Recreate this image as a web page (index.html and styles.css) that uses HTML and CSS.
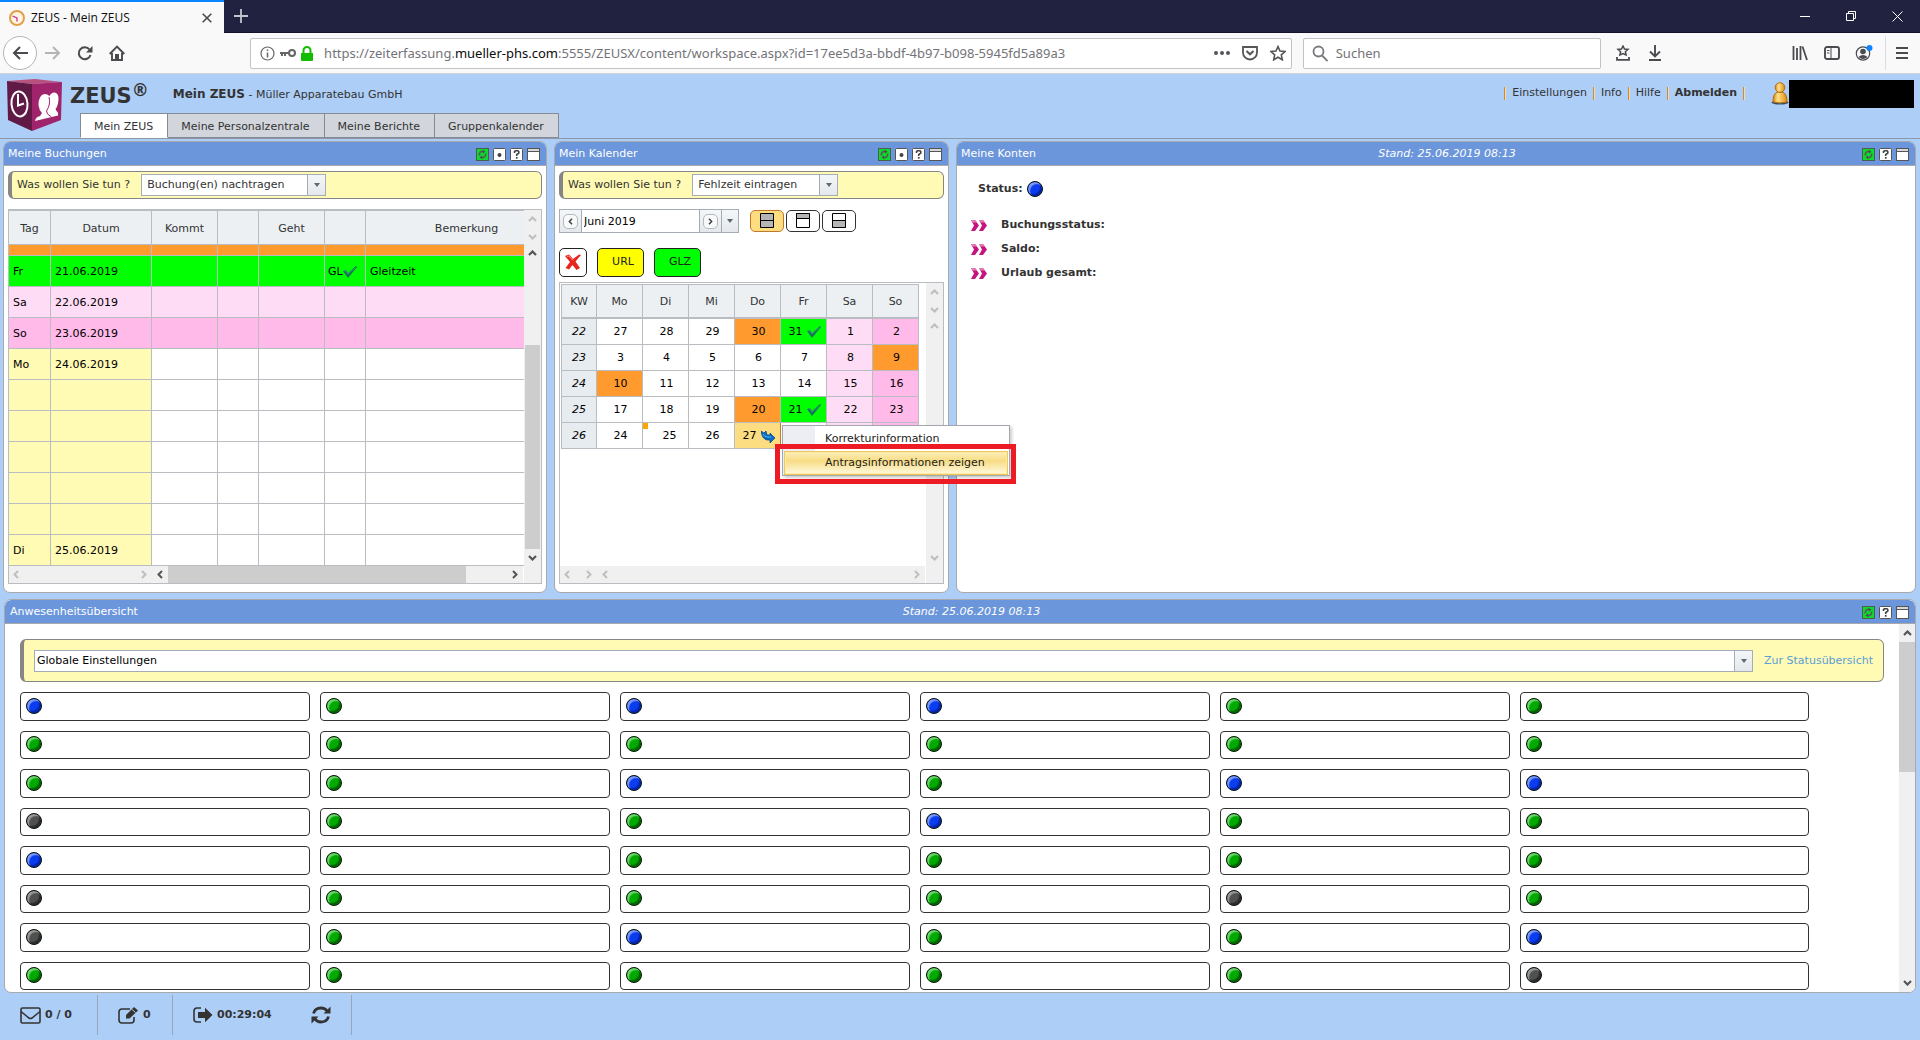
FILE: index.html
```html
<!DOCTYPE html>
<html lang="de">
<head>
<meta charset="utf-8">
<title>ZEUS - Mein ZEUS</title>
<link rel="stylesheet" href="styles.css">
</head>
<body>
<svg class="sprite" aria-hidden="true">
  <symbol id="up" viewBox="0 0 9 6"><path d="M1 5L4.500 1.500L8 5" fill="none" stroke="currentColor" stroke-width="2.200"/></symbol>
  <symbol id="down" viewBox="0 0 9 6"><path d="M1 1L4.500 4.500L8 1" fill="none" stroke="currentColor" stroke-width="2.200"/></symbol>
  <symbol id="left" viewBox="0 0 6 9"><path d="M5 1L1.500 4.500L5 8" fill="none" stroke="currentColor" stroke-width="2"/></symbol>
  <symbol id="right" viewBox="0 0 6 9"><path d="M1 1L4.500 4.500L1 8" fill="none" stroke="currentColor" stroke-width="2"/></symbol>
  <symbol id="check" viewBox="0 0 14 12"><path d="M0 5L3 4L5 7L13 0L14 1L5 12Z" fill="#12725a"/><path d="M1 5L3 4.500L5 8L12 2" fill="none" stroke="#3aa06c"/></symbol>
  <symbol id="w-refresh" viewBox="0 0 13 13"><rect x=".5" y=".5" width="12" height="12" fill="#0adb2c" stroke="#4f5a50"/><path d="M3.500 7.500A3 3 0 0 1 7.500 3.700M9.500 5.500A3 3 0 0 1 5.500 9.300" fill="none" stroke="#5a5a5a" stroke-width="1.700"/><path d="M6.500 2l3 1.500-2.500 2zM6.500 11l-3-1.500 2.500-2z" fill="#4a4a4a"/></symbol>
  <symbol id="w-dot" viewBox="0 0 13 13"><rect x=".5" y=".5" width="12" height="12" rx="1" fill="#fff" stroke="#555"/><circle cx="6.500" cy="7" r="2" fill="#444"/></symbol>
  <symbol id="w-help" viewBox="0 0 13 13"><rect x=".5" y=".5" width="12" height="12" rx="1" fill="#fff" stroke="#555"/><path d="M4.500 5V3.500L5.500 2.800H8L8.800 3.500V5L6.700 6.600V8" fill="none" stroke="#444" stroke-width="1.600"/><path d="M5.900 9h1.700v1.700H5.900z" fill="#444"/></symbol>
  <symbol id="w-max" viewBox="0 0 13 13"><rect x=".5" y=".5" width="12" height="12" fill="#fff" stroke="#555"/><path d="M1 1h11v2H1z" fill="#d8d8d8"/><path d="M1 3.500h11" stroke="#555"/></symbol>
  <symbol id="chev" viewBox="0 0 16 11"><path d="M0 0h4l4 5.500L4 11H0l3-5.500zM8 0h4l4 5.500L12 11H8l3-5.500z" fill="#c4157c"/><path d="M0 0h4l2 2.500H1.500zM8 0h4l2 2.500H9.500z" fill="#df7ab2"/></symbol>
</svg>

<div class="tabbar">
  <div class="browser-tab">
    <svg width="16" height="16" viewBox="0 0 16 16"><circle cx="8" cy="8" r="7" fill="#fff5e2" stroke="#e0a04a" stroke-width="2"/><path d="M3.500 6L8 8v3.500" fill="none" stroke="#c8328c" stroke-width="1.300"/></svg>
    <span class="browser-tab__title">ZEUS - Mein ZEUS</span>
    <button class="plain" aria-label="Tab schließen"><svg width="10" height="10" viewBox="0 0 10 10"><path d="M.7.700l8.600 8.600M9.300.700L.7 9.300" stroke="#4a4a4f" stroke-width="1.600"/></svg></button>
  </div>
  <button class="plain newtab" aria-label="Neuer Tab"><svg width="14" height="14" viewBox="0 0 14 14"><path d="M7 0v14M0 7h14" stroke="#c4c4cf" stroke-width="1.800"/></svg></button>
  <div class="winbtns">
    <button class="plain" aria-label="Minimieren"><svg width="10" height="10"><path d="M0 5.500h10" stroke="#fff"/></svg></button>
    <button class="plain" aria-label="Verkleinern"><svg width="10" height="10"><path d="M.5 2.500h7v7h-7zM2.500 2.500v-2h7v7h-2" fill="none" stroke="#fff"/></svg></button>
    <button class="plain" aria-label="Schließen"><svg width="11" height="11"><path d="M.5.500l10 10M10.500.500l-10 10" stroke="#fff"/></svg></button>
  </div>
</div>

<div class="navbar">
  <button class="plain back" aria-label="Zurück"><svg width="16" height="14" viewBox="0 0 16 14"><path d="M16 7H2M8 1L2 7l6 6" fill="none" stroke="#4a4a4f" stroke-width="2"/></svg></button>
  <button class="plain tool" aria-label="Vor"><svg width="16" height="14" viewBox="0 0 16 14"><path d="M0 7h14M8 1l6 6-6 6" fill="none" stroke="#b5b5b8" stroke-width="2"/></svg></button>
  <button class="plain tool" aria-label="Neu laden"><svg width="16" height="16" viewBox="0 0 16 16"><path d="M12.500 4.500A6 6 0 1 0 13.500 10" fill="none" stroke="#4a4a4f" stroke-width="2"/><path d="M15.500 1v6.500H9z" fill="#4a4a4f"/></svg></button>
  <button class="plain tool" aria-label="Startseite"><svg width="16" height="16" viewBox="0 0 16 16"><path d="M.7 9L8 1.500L15.300 9M3 8v7h10V8" fill="none" stroke="#4a4a4f" stroke-width="1.900"/><path d="M6 9h4v5H6z" fill="#4a4a4f"/></svg></button>
  <span class="space"></span>
  <div class="urlbar">
    <svg width="15" height="15" viewBox="0 0 15 15"><circle cx="7.500" cy="7.500" r="6.500" fill="none" stroke="#66666a" stroke-width="1.200"/><path d="M7.500 6.500v5M7.500 3.500v1.500" stroke="#66666a" stroke-width="1.500"/></svg>
    <svg width="16" height="8" viewBox="0 0 16 8"><circle cx="12" cy="4" r="3" fill="none" stroke="#66666a" stroke-width="2"/><path d="M0 4h9M2 4v3M5 4v3" stroke="#66666a" stroke-width="2"/></svg>
    <svg width="12" height="15" viewBox="0 0 12 15"><path d="M0 7h12v7a1 1 0 0 1-1 1H1a1 1 0 0 1-1-1z" fill="#12bc00"/><path d="M2.500 8V4.500a3.500 3.500 0 0 1 7 0V8" fill="none" stroke="#12bc00" stroke-width="2"/></svg>
    <span class="url">https://zeiterfassung.<b>mueller-phs.com</b>:5555/ZEUSX/content/workspace.aspx?id=17ee5d3a-bbdf-4b97-b098-5945fd5a89a3</span>
    <span class="urlbar__actions">
      <svg width="16" height="16"><circle cx="2" cy="8" r="2" fill="#55555a"/><circle cx="8" cy="8" r="2" fill="#55555a"/><circle cx="14" cy="8" r="2" fill="#55555a"/></svg>
      <svg width="16" height="16" viewBox="0 0 16 16"><path d="M1 2h14v5.500a7 7 0 0 1-14 0z" fill="none" stroke="#55555a" stroke-width="1.800"/><path d="M4.500 6L8 9.300L11.500 6" fill="none" stroke="#55555a" stroke-width="2"/></svg>
      <svg width="16" height="16" viewBox="0 0 16 16"><path d="M8 1.500l2 4.500 5 .5-3.700 3.300 1 5L8 12.300l-4.300 2.500 1-5L1 6.500 6 6z" fill="none" stroke="#55555a" stroke-width="1.600"/></svg>
    </span>
  </div>
  <label class="search">
    <svg width="16" height="17" viewBox="0 0 16 17"><circle cx="6.500" cy="6.500" r="5" fill="none" stroke="#7a7a7e" stroke-width="1.800"/><path d="M10 10.500l5.500 5.500" stroke="#7a7a7e" stroke-width="1.800"/></svg>
    <input type="text" placeholder="Suchen" aria-label="Suchen">
  </label>
  <div class="tools">
    <button class="plain tool" aria-label="Lesezeichen"><svg width="16" height="16" viewBox="0 0 16 16"><path d="M8 1l1.500 3 3.500.4-2.600 2.300.7 3.300L8 8.500 4.900 10l.7-3.300L3 4.400 6.500 4z" fill="none" stroke="#4a4a4f" stroke-width="1.500"/><path d="M2 12v2.800h12V12" fill="none" stroke="#4a4a4f" stroke-width="1.800"/></svg></button>
    <button class="plain tool" aria-label="Downloads"><svg width="14" height="16" viewBox="0 0 14 16"><path d="M7 0v11M2 6.500l5 5 5-5M1 15h12" fill="none" stroke="#4a4a4f" stroke-width="1.900"/></svg></button>
  </div>
  <span class="space space--end"></span>
  <div class="tools">
    <button class="plain tool" aria-label="Bibliothek"><svg width="16" height="16" viewBox="0 0 16 16"><path d="M1.500 1v14M5 3v12M8.500 1v14M10.500 1.500L15 15" fill="none" stroke="#4a4a4f" stroke-width="1.800"/></svg></button>
    <button class="plain tool" aria-label="Seitenleiste"><svg width="16" height="14" viewBox="0 0 16 14"><rect x="1" y="1" width="14" height="12" rx="2" fill="none" stroke="#4a4a4f" stroke-width="1.900"/><path d="M7 1v12" stroke="#4a4a4f"/><path d="M3 4.500h2.500M3 7h2.500" stroke="#4a4a4f"/></svg></button>
    <button class="plain tool" aria-label="Konto"><svg width="18" height="16" viewBox="0 0 18 16"><circle cx="8" cy="8.500" r="6.700" fill="none" stroke="#4a4a4f" stroke-width="1.200"/><circle cx="8" cy="6.500" r="2.800" fill="#4a4a4f"/><path d="M3.500 12q4.500-4 9 0q-4.500 4-9 0z" fill="#4a4a4f"/><circle cx="14.500" cy="3" r="3" fill="#0a84ff"/></svg></button>
    <button class="plain tool menu-btn" aria-label="Menü"><svg width="12" height="12"><path d="M0 1h12M0 6h12M0 11h12" stroke="#4a4a4f" stroke-width="2"/></svg></button>
  </div>
</div>

<header class="app-head">
  <svg class="logo" width="56" height="52" viewBox="0 0 56 52"><path d="M0 2L28 0L55 3L25 5z" fill="#b9517d"/><path d="M0 2l25 3v47L1 41z" fill="#611a45"/><path d="M25 5l30-2-1 38-29 11z" fill="#a0246c"/><ellipse cx="12.500" cy="25" rx="8" ry="12.500" fill="none" stroke="#fff" stroke-width="2" transform="rotate(-5 12 25)"/><path d="M11 15v11.500l6-2" fill="none" stroke="#fff" stroke-width="2"/><path d="M28 42q.5-4 5-5l2-3q-3-3-3.500-8 0-10 6-11 3 0 5 2 2-4 5.500-3.500 5 1.500 3 11-1 4-2.500 5.500l1 2q2 1 1.500 4.500z" fill="#fff"/><path d="M42 18q2 7-2.500 14l1 3 4 3" fill="none" stroke="#a0246c"/></svg>
  <div class="head-main">
    <div class="head-top">
      <h1>ZEUS<sup>®</sup></h1>
      <p class="company"><strong>Mein ZEUS</strong> - Müller Apparatebau GmbH</p>
      <nav class="links"><a href="#">Einstellungen</a><a href="#">Info</a><a href="#">Hilfe</a><a href="#"><strong>Abmelden</strong></a></nav>
      <div class="user">
        <svg width="18" height="23" viewBox="0 0 18 23"><defs><linearGradient id="gold"><stop offset="0" stop-color="#d98310"/><stop offset=".35" stop-color="#ffe08a"/><stop offset="1" stop-color="#e38c10"/></linearGradient></defs><ellipse cx="9" cy="20.500" rx="8.500" ry="2" fill="#38506b"/><path d="M2 20q0-9 5-10h4q5 1 5 10-7 2-14 0z" fill="url(#gold)" stroke="#b36b08"/><circle cx="9" cy="5.500" r="4.800" fill="url(#gold)" stroke="#b36b08"/></svg>
        <span class="user__name"></span>
      </div>
    </div>
    <nav class="tabs"><a class="active" href="#">Mein ZEUS</a><a href="#">Meine Personalzentrale</a><a href="#">Meine Berichte</a><a href="#">Gruppenkalender</a></nav>
  </div>
</header>

<main>
  <div class="top-panels">
    <section class="panel">
      <header><h2>Meine Buchungen</h2><span></span>
        <div class="icons"><button class="plain" aria-label="Aktualisieren"><svg><use href="#w-refresh"/></svg></button><button class="plain" aria-label="Optionen"><svg><use href="#w-dot"/></svg></button><button class="plain" aria-label="Hilfe"><svg><use href="#w-help"/></svg></button><button class="plain" aria-label="Maximieren"><svg><use href="#w-max"/></svg></button></div>
      </header>
      <div class="body">
        <div class="action"><label for="todo">Was wollen Sie tun ?</label><span class="combo combo--wide"><select id="todo"><option>Buchung(en) nachtragen</option></select></span></div>
        <div class="pane pane--bookings">
          <div class="clip">
            <table class="bookings">
              <colgroup><col class="c42"><col class="c101"><col class="c66"><col class="c41"><col class="c66"><col class="c41"><col></colgroup>
              <thead><tr><th>Tag</th><th>Datum</th><th>Kommt</th><th></th><th>Geht</th><th></th><th>Bemerkung</th></tr></thead>
              <tbody>
                <tr class="orange thin"><td></td><td></td><td></td><td></td><td></td><td></td><td></td></tr>
                <tr class="green"><td>Fr</td><td>21.06.2019</td><td></td><td></td><td></td><td class="code"><span>GL<svg width="14" height="12"><use href="#check"/></svg></span></td><td>Gleitzeit</td></tr>
                <tr class="sat"><td>Sa</td><td>22.06.2019</td><td></td><td></td><td></td><td></td><td></td></tr>
                <tr class="sun"><td>So</td><td>23.06.2019</td><td></td><td></td><td></td><td></td><td></td></tr>
                <tr class="work"><td>Mo</td><td>24.06.2019</td><td></td><td></td><td></td><td></td><td></td></tr>
                <tr class="work"><td></td><td></td><td></td><td></td><td></td><td></td><td></td></tr>
                <tr class="work"><td></td><td></td><td></td><td></td><td></td><td></td><td></td></tr>
                <tr class="work"><td></td><td></td><td></td><td></td><td></td><td></td><td></td></tr>
                <tr class="work"><td></td><td></td><td></td><td></td><td></td><td></td><td></td></tr>
                <tr class="work"><td></td><td></td><td></td><td></td><td></td><td></td><td></td></tr>
                <tr class="work"><td>Di</td><td>25.06.2019</td><td></td><td></td><td></td><td></td><td></td></tr>
              </tbody>
            </table>
          </div>
          <div class="vscroll">
            <div class="vscroll__head off"><svg width="9" height="6"><use href="#up"/></svg><svg width="9" height="6"><use href="#down"/></svg></div>
            <svg class="arrow" width="9" height="6"><use href="#up"/></svg>
            <div class="track"><div class="thumb thumb--bookings"></div></div>
            <svg class="arrow" width="9" height="6"><use href="#down"/></svg>
          </div>
          <div class="hscroll">
            <div class="hscroll__fixed off"><svg width="6" height="9"><use href="#left"/></svg><svg width="6" height="9"><use href="#right"/></svg></div>
            <svg width="6" height="9"><use href="#left"/></svg><div class="htrack"><div class="hthumb"></div></div><svg width="6" height="9"><use href="#right"/></svg>
          </div>
        </div>
      </div>
    </section>

    <section class="panel">
      <header><h2>Mein Kalender</h2><span></span>
        <div class="icons"><button class="plain" aria-label="Aktualisieren"><svg><use href="#w-refresh"/></svg></button><button class="plain" aria-label="Optionen"><svg><use href="#w-dot"/></svg></button><button class="plain" aria-label="Hilfe"><svg><use href="#w-help"/></svg></button><button class="plain" aria-label="Maximieren"><svg><use href="#w-max"/></svg></button></div>
      </header>
      <div class="body">
        <div class="action"><label for="todo2">Was wollen Sie tun ?</label><span class="combo"><select id="todo2"><option>Fehlzeit eintragen</option></select></span></div>
        <div class="calbar">
          <div class="month">
            <button class="plain" aria-label="Vorheriger Monat"><span class="round"><svg width="5" height="7" viewBox="0 0 6 9"><use href="#left"/></svg></span></button>
            <input type="text" value="Juni 2019" aria-label="Monat">
            <button class="plain" aria-label="Nächster Monat"><span class="round"><svg width="5" height="7" viewBox="0 0 6 9"><use href="#right"/></svg></span></button>
            <button class="plain drop" aria-label="Monat wählen"><svg width="6" height="4"><path d="M0 0h6L3 4z" fill="#5d6872"/></svg></button>
          </div>
          <div class="views">
            <button class="view view--on" aria-label="Ganzer Tag"><svg width="14" height="16"><path d="M.5.500h13v14H.5z" fill="#b5b5b5" stroke="#000"/><path d="M0 7.500h14" stroke="#000"/></svg></button>
            <button class="view" aria-label="Vormittag"><svg width="14" height="16"><path d="M.5.500h13v14H.5z" fill="#fff" stroke="#000"/><path d="M.5.500h13v5h-13z" fill="#b5b5b5" stroke="#000"/></svg></button>
            <button class="view" aria-label="Nachmittag"><svg width="14" height="16"><path d="M.5.500h13v14H.5z" fill="#fff" stroke="#000"/><path d="M.5 7.500h13v7H.5z" fill="#b5b5b5" stroke="#000"/></svg></button>
          </div>
        </div>
        <div class="types">
          <button class="type type--del" aria-label="Löschen"><svg width="16" height="16" viewBox="0 0 16 16"><path d="M0 2l4-1.500 4 4.500 6-4.500 2 .5-5.500 6.500L15 14l-3.500 2L7.500 11 4 15.500.5 14 5 8z" fill="#e8251c"/><path d="M2 2.500l2-.5L8 6.500" fill="none" stroke="#ff8a80"/></svg></button>
          <button class="type type--url">URL</button>
          <button class="type type--glz">GLZ</button>
        </div>
        <div class="pane pane--cal">
          <div class="calwrap">
            <table class="cal">
              <thead><tr><th class="kw">KW</th><th>Mo</th><th>Di</th><th>Mi</th><th>Do</th><th>Fr</th><th>Sa</th><th>So</th></tr></thead>
              <tbody>
                <tr><th>22</th><td>27</td><td>28</td><td>29</td><td class="orange">30</td><td class="green"><span>31<svg width="14" height="12"><use href="#check"/></svg></span></td><td class="sat">1</td><td class="sun">2</td></tr>
                <tr><th>23</th><td>3</td><td>4</td><td>5</td><td>6</td><td>7</td><td class="sat">8</td><td class="orange">9</td></tr>
                <tr><th>24</th><td class="orange">10</td><td>11</td><td>12</td><td>13</td><td>14</td><td class="sat">15</td><td class="sun">16</td></tr>
                <tr><th>25</th><td>17</td><td>18</td><td>19</td><td class="orange">20</td><td class="green"><span>21<svg width="14" height="12"><use href="#check"/></svg></span></td><td class="sat">22</td><td class="sun">23</td></tr>
                <tr><th>26</th><td>24</td><td class="today">25</td><td>26</td><td class="picked"><span>27<svg width="14" height="13" viewBox="0 0 14 13"><path d="M0 1l3 2 2-2 1 4h3V3l5 5-5 5v-3H6Q1 9 0 1z" fill="#0a6fc4" stroke="#053f7c" stroke-width=".7"/><path d="M2 4q1 3 5 3h3" fill="none" stroke="#4ab4ff"/></svg></span></td><td class="anchor">
                  <div class="popup">
                    <button class="plain popup__item">Korrekturinformation</button>
                    <button class="plain popup__item popup__item--hot">Antragsinformationen zeigen</button>
                    <div class="marker"></div>
                  </div></td><td class="sat"></td><td class="sun"></td></tr>
              </tbody>
            </table>
          </div>
          <div class="vscroll off">
            <div class="vscroll__head"><svg width="9" height="6"><use href="#up"/></svg><svg width="9" height="6"><use href="#down"/></svg></div>
            <svg class="arrow" width="9" height="6"><use href="#up"/></svg>
            <div class="track"></div>
            <svg class="arrow" width="9" height="6"><use href="#down"/></svg>
          </div>
          <div class="hscroll off">
            <div class="hscroll__fixed hscroll__fixed--small"><svg width="6" height="9"><use href="#left"/></svg><svg width="6" height="9"><use href="#right"/></svg></div>
            <svg width="6" height="9"><use href="#left"/></svg><div class="htrack"></div><svg width="6" height="9"><use href="#right"/></svg>
          </div>
        </div>
      </div>
    </section>

    <section class="panel">
      <header><h2>Meine Konten</h2><em>Stand: 25.06.2019 08:13</em>
        <div class="icons"><button class="plain" aria-label="Aktualisieren"><svg><use href="#w-refresh"/></svg></button><button class="plain" aria-label="Hilfe"><svg><use href="#w-help"/></svg></button><button class="plain" aria-label="Maximieren"><svg><use href="#w-max"/></svg></button></div>
      </header>
      <div class="accounts">
        <p class="status">Status: <i class="dot blue"></i></p>
        <ul>
          <li><svg width="16" height="11"><use href="#chev"/></svg>Buchungsstatus:</li>
          <li><svg width="16" height="11"><use href="#chev"/></svg>Saldo:</li>
          <li><svg width="16" height="11"><use href="#chev"/></svg>Urlaub gesamt:</li>
        </ul>
      </div>
    </section>
  </div>

  <section class="panel panel--presence">
    <header><h2>Anwesenheitsübersicht</h2><em>Stand: 25.06.2019 08:13</em>
      <div class="icons"><button class="plain" aria-label="Aktualisieren"><svg><use href="#w-refresh"/></svg></button><button class="plain" aria-label="Hilfe"><svg><use href="#w-help"/></svg></button><button class="plain" aria-label="Maximieren"><svg><use href="#w-max"/></svg></button></div>
    </header>
    <div class="presence">
      <div class="presence__main">
        <div class="action action--tall"><span class="combo combo--fill"><select aria-label="Einstellungen"><option>Globale Einstellungen</option></select></span><a href="#">Zur Statusübersicht</a></div>
        <ul class="people">
          <li><i class="dot blue"></i></li><li><i class="dot"></i></li><li><i class="dot blue"></i></li><li><i class="dot blue"></i></li><li><i class="dot"></i></li><li><i class="dot"></i></li>
          <li><i class="dot"></i></li><li><i class="dot"></i></li><li><i class="dot"></i></li><li><i class="dot"></i></li><li><i class="dot"></i></li><li><i class="dot"></i></li>
          <li><i class="dot"></i></li><li><i class="dot"></i></li><li><i class="dot blue"></i></li><li><i class="dot"></i></li><li><i class="dot blue"></i></li><li><i class="dot blue"></i></li>
          <li><i class="dot gray"></i></li><li><i class="dot"></i></li><li><i class="dot"></i></li><li><i class="dot blue"></i></li><li><i class="dot"></i></li><li><i class="dot"></i></li>
          <li><i class="dot blue"></i></li><li><i class="dot"></i></li><li><i class="dot"></i></li><li><i class="dot"></i></li><li><i class="dot"></i></li><li><i class="dot"></i></li>
          <li><i class="dot gray"></i></li><li><i class="dot"></i></li><li><i class="dot"></i></li><li><i class="dot"></i></li><li><i class="dot gray"></i></li><li><i class="dot"></i></li>
          <li><i class="dot gray"></i></li><li><i class="dot"></i></li><li><i class="dot blue"></i></li><li><i class="dot"></i></li><li><i class="dot"></i></li><li><i class="dot blue"></i></li>
          <li><i class="dot"></i></li><li><i class="dot"></i></li><li><i class="dot"></i></li><li><i class="dot"></i></li><li><i class="dot"></i></li><li><i class="dot gray"></i></li>
        </ul>
      </div>
      <div class="vscroll">
        <svg class="arrow" width="9" height="6"><use href="#up"/></svg>
        <div class="track"><div class="thumb thumb--presence"></div></div>
        <svg class="arrow" width="9" height="6"><use href="#down"/></svg>
      </div>
    </div>
  </section>
</main>

<footer>
  <div class="stat"><svg width="21" height="17" viewBox="0 0 21 17"><rect x="1" y="1" width="19" height="15" rx="1.500" fill="none" stroke="#333" stroke-width="1.600"/><path d="M1 4.500L9 11q1.500 1 3 0l8-6.500" fill="none" stroke="#333" stroke-width="1.600"/></svg>0 / 0</div>
  <div class="stat"><svg width="21" height="18" viewBox="0 0 21 18"><path d="M12 3H4Q1 3 1 6v8q0 3 3 3h9q3 0 3-3v-3" fill="none" stroke="#333" stroke-width="1.600"/><path d="M8 9l8-8 4 3.500-8.500 8H8z" fill="#333"/><path d="M14 3.500l3.500 3" stroke="#adcef7"/></svg>0</div>
  <div class="stat"><svg width="20" height="16" viewBox="0 0 20 16"><path d="M8 1H4Q1 1 1 4v8q0 3 3 3h4" fill="none" stroke="#333" stroke-width="1.600"/><path d="M5 5h7V.800L19.500 8 12 15.200V11H5z" fill="#333"/></svg>00:29:04
    <button class="plain" aria-label="Aktualisieren"><svg width="20" height="18" viewBox="0 0 20 18"><path d="M2.500 7.500Q4 2 10 2q4 0 6 3M17.500 10.500Q16 16 10 16q-4 0-6-3" fill="none" stroke="#333" stroke-width="2.800"/><path d="M19.500.500v7h-7zM.5 17.500v-7h7z" fill="#333"/></svg></button></div>
</footer>
</body>
</html>
```
FILE: styles.css
```css
* { box-sizing: border-box; }
body {
  margin: 0;
  min-height: 100vh;
  display: flex;
  flex-direction: column;
  background: #adcef7;
  color: #333;
  font: 11px/16px "DejaVu Sans", Verdana, sans-serif;
}
h1, h2, p, ul { margin: 0; padding: 0; }
ul { list-style: none; }
a { color: inherit; text-decoration: none; }
svg { display: block; flex: none; }
.sprite { position: absolute; width: 0; height: 0; }
input, select, button { font: inherit; color: inherit; }
.plain { border: 0; padding: 0; margin: 0; background: none; }

/* Browser window */
.tabbar { display: flex; height: 33px; background: #20223f; border-bottom: 1px solid #12132a; font: 12px/16px "Open Sans", sans-serif; }
.browser-tab {
  display: flex; align-items: center; gap: 6px;
  width: 224px; height: 33px; padding: 0 12px 0 9px;
  background: #f9f9fa; border-top: 2px solid #0a84ff; color: #0c0c0d;
}
.browser-tab__title { flex: 1; }
.newtab { width: 34px; display: flex; justify-content: center; align-items: center; }
.winbtns { display: flex; margin-left: auto; }
.winbtns button { width: 46px; display: flex; justify-content: center; align-items: center; }
.navbar {
  display: flex; align-items: center; height: 41px; padding: 0 3px;
  background: #f9f9fa; border-bottom: 1px solid #d4d4d8;
  font: 13px/18px "Noto Sans", "Open Sans", sans-serif;
}
.back { display: flex; align-items: center; justify-content: center; width: 34px; height: 34px; border: 1px solid #b4b4b6; border-radius: 50%; background: #fff; }
.tool { display: flex; align-items: center; justify-content: center; width: 32px; height: 34px; }
.tools { display: flex; }
.space { width: 6.1vw; flex: none; }
.space--end { width: 5.9vw; }
.urlbar, .search { display: flex; align-items: center; height: 31px; background: #fff; border: 1px solid #c2c2c4; border-radius: 2px; }
.urlbar { flex: 1; min-width: 0; gap: 5px; padding: 0 5px 0 9px; color: #737378; }
.url { margin-left: 6px; flex: 1; white-space: nowrap; overflow: hidden; }
.url b { font-weight: 400; color: #0c0c0d; }
.urlbar__actions { display: flex; gap: 12px; }
.search { width: 298px; margin: 0 6px 0 11px; padding: 0 8px; gap: 8px; }
.search input { flex: 1; min-width: 0; border: 0; padding: 0; outline: 0; background: none; }
.search input::placeholder { color: #737378; opacity: 1; }
.menu-btn { margin-left: 5px; border-left: 1px solid #dcdce0; }

/* Application header */
.app-head { display: flex; height: 65px; border-bottom: 1px solid #8c97a8; }
.logo { margin: 5px 7px 0 7px; }
.head-main { flex: 1; display: flex; flex-direction: column; }
.head-top { display: flex; height: 40px; padding: 0 6px 0 0; }
h1 { font-size: 21px; line-height: 24px; padding-top: 10px; }
sup { font-size: 17px; line-height: 0; vertical-align: 7px; font-weight: 700; }
.company { padding: 12px 0 0 24px; white-space: nowrap; }
.company strong { font-size: 12px; }
.links { display: flex; gap: 6px; margin-left: auto; padding-top: 12px; height: 26px; }
.links a { display: flex; align-items: center; gap: 6px; }
.links a::before, .links a:last-child::after { content: ""; width: 2px; height: 13px; background: linear-gradient(90deg, #c98a3c 50%, #ffd99b 50%); }
.user { display: flex; align-items: flex-start; padding-top: 6px; margin-left: 26px; }
.user svg { margin-top: 2px; }
.user__name { width: 125px; height: 28px; background: #000; }
.tabs { display: flex; margin-left: 10px; height: 25px; }
.tabs a { padding: 1px 14px 0 13px; border: 1px solid #858b94; border-left-width: 0; background: #d2d6dc; line-height: 24px; }
.tabs a.active { background: #fff; border-left-width: 1px; border-bottom-color: #fff; }

/* Panels */
main { padding: 2px 4px 0 3px; }
.top-panels { display: grid; grid-template-columns: 544fr 395fr 960fr; gap: 7px; }
.panel { background: #fff; border: 1px solid #a9a9ab; border-radius: 7px; min-width: 0; }
.panel > header {
  display: grid; grid-template-columns: 1fr auto 1fr; align-items: center;
  height: 24px; padding: 1px 6px 0 4px;
  background: #6b96db; color: #fff; border-bottom: 1px solid #a9a9ab; border-radius: 6px 6px 0 0;
}
.panel > header em { margin-left: 24px; }
h2 { font-size: 11px; font-weight: 400; line-height: 16px; }
.icons { display: flex; gap: 4px; justify-self: end; }
.icons svg { width: 13px; height: 13px; }
.body { padding: 5px 4px 8px; }
.action {
  display: flex; align-items: center; gap: 11px; height: 28px; padding: 0 7px 0 5px;
  background: #fffab4; border: 1px solid #868686; border-left: 4px solid #868686; border-radius: 6px;
}
.combo { position: relative; display: flex; width: 146px; height: 22px; }
.combo--wide { width: 185px; }
.combo--fill { flex: 1; }
.combo select { width: 100%; height: 100%; border: 1px solid #a6acb6; border-radius: 0; background: #fff; padding: 0 20px 0 5px; appearance: none; outline: 0; }
.combo--fill select { color: #000; padding-left: 2px; }
.combo::before { content: ""; position: absolute; right: 1px; top: 1px; bottom: 1px; width: 17px; border-left: 1px solid #a6acb6; background: linear-gradient(#f4f7f9, #e4e8ec); pointer-events: none; }
.combo::after { content: ""; position: absolute; right: 6px; top: 9px; border: 3px solid transparent; border-top: 4px solid #5d6872; border-bottom: 0; pointer-events: none; }

/* Grids with their scroll bars */
.pane { display: grid; grid-template-columns: 1fr 17px; border: 1px solid #b9bdc2; }
.pane--bookings { margin-top: 10px; grid-template-rows: 356px 17px; }
.pane--cal { margin-top: 5px; grid-template-rows: 283px 17px; }
.clip { overflow: hidden; }
.vscroll { display: flex; flex-direction: column; align-items: center; background: #f0f0f0; color: #555; grid-row: span 2; }
.vscroll__head { display: flex; flex-direction: column; justify-content: space-between; height: 34px; padding: 6px 0 4px; }
.arrow { margin: 6px 0; }
.track { flex: 1; align-self: stretch; display: flex; flex-direction: column; }
.thumb { background: #cdcdcd; }
.thumb--bookings { margin-top: 83px; height: 204px; }
.thumb--presence { height: 130px; }
.pane .vscroll { padding-bottom: 16px; }
.pane .vscroll .track { margin: 0 1px; }
.hscroll { display: flex; align-items: center; background: #f0f0f0; color: #555; padding: 0 5px 0 4px; border-right: 1px solid #fff; }
.hscroll__fixed { display: flex; justify-content: space-between; width: 134px; margin-right: 10px; }
.hscroll__fixed--small { width: 28px; }
.htrack { flex: 1; align-self: stretch; margin: 0 5px; }
.hthumb { width: 88%; height: 100%; background: #cdcdcd; }
.off, .off svg { color: #bfbfbf; }

table { border-collapse: separate; border-spacing: 0; table-layout: fixed; }
th { font-weight: 400; background: #ecf0f3; }
th, td { padding: 0; border: 0 solid #b9bdc2; border-width: 0 1px 1px 0; }
td { color: #000; }
.bookings { width: 559px; }
.c42 { width: 42px; } .c101 { width: 101px; } .c66 { width: 66px; } .c41 { width: 41px; }
.bookings th { height: 35px; padding-top: 2px; border-top-width: 1px; }
.bookings td { height: 31px; padding: 2px 4px 0; }
.bookings .thin td { height: 11px; padding: 0; }
.bookings .code { padding: 2px 2px 0 3px; }
td span { display: flex; align-items: center; }
.orange, .orange td { background: #ff9a2e; }
.green, .green td { background: #0f0; }
.sat, .sat td { background: #ffdcf5; }
.sun, .sun td { background: #ffbae9; }
.work td:nth-child(-n+2) { background: #fffab4; }

.calbar { display: flex; gap: 11px; margin-top: 10px; height: 24px; align-items: center; }
.month { display: flex; width: 180px; height: 24px; border: 1px solid #a6acb6; }
.month button { width: 21px; display: flex; align-items: center; justify-content: center; background: linear-gradient(#f4f7f9, #e4e8ec); color: #444; }
.month .drop { width: 17px; border-left: 1px solid #a6acb6; }
.month input { flex: 1; min-width: 0; border: 1px solid #a6acb6; border-width: 0 1px; padding: 2px 2px 0; color: #000; outline: 0; }
.round { display: flex; align-items: center; justify-content: center; width: 15px; height: 15px; border: 1px solid #b4b8bf; border-radius: 5px; background: #f7f9fa; }
.views { display: flex; gap: 2px; }
.view { display: flex; align-items: center; justify-content: center; width: 34px; height: 22px; padding: 0; border: 1px solid #333; border-radius: 5px; background: #fff; }
.view--on { background: #fedc80; border-color: #c2792e; }
.types { display: flex; gap: 10px; margin-top: 15px; }
.type { height: 29px; width: 47px; padding: 0 0 2px 5px; border: 1px solid #222; border-radius: 5px; color: #222; }
.type--del { width: 28px; background: #fff; }
.type--url { background: #ff0; }
.type--glz { background: #0f0; }

.cal { width: 358px; margin: 1px; border-left: 1px solid #b9bdc2; }
.cal th, .cal td { height: 26px; padding-top: 1px; text-align: center; }
.cal thead th { height: 35px; border-top-width: 1px; border-bottom-width: 2px; }
.cal .kw { width: 35px; }
.cal tbody th { font-style: italic; background: #e7ecf0; color: #000; }
.cal td { padding-left: 2px; }
.cal td span { justify-content: center; gap: 4px; }
.cal td.today { background: linear-gradient(#ffa500, #ffa500) 0 0 / 5px 6px no-repeat; padding-left: 8px; }
.cal td.picked { background: #fddd82; border-right-color: #c27a30; }
.cal td.anchor { position: relative; }
.popup { position: absolute; z-index: 2; top: 2px; left: 1px; width: 228px; height: 51px; padding: 1px; border: 1px solid #a3a8ae; background: linear-gradient(90deg, #eceef3 32px, #fff 32px); box-shadow: 2px 2px 3px #0003; }
.popup__item { display: block; width: 100%; height: 24px; padding: 0 0 0 41px; text-align: left; color: #222; white-space: nowrap; }
.popup__item--hot { border: 1px solid #eec85a; box-shadow: inset 0 0 0 1px #fbeaa8; padding-left: 40px; background: linear-gradient(#fbeeb8, #f7dc84 40%, #fff9e0); }
.marker { position: absolute; left: -8px; top: 18px; width: 241px; height: 40px; border: 5px solid #ed1c24; pointer-events: none; }

/* Accounts */
.accounts { padding: 15px 14px; font-weight: 700; }
.status { display: flex; align-items: center; gap: 4px; height: 16px; padding-left: 7px; }
.accounts ul { margin-top: 16px; }
.accounts li { display: flex; align-items: center; gap: 14px; height: 24px; }
.dot {
  display: block; width: 16px; height: 16px; border: 1px solid #051505; border-radius: 50%;
  background: #0a0; box-shadow: inset 2px 2px 1px #6fd46f, inset -2px -2px 1px #056205;
}
.dot.blue { background: #0a3cf0; box-shadow: inset 2px 2px 1px #7c9af8, inset -2px -2px 1px #0624a8; }
.dot.gray { background: #505050; box-shadow: inset 2px 2px 1px #9a9a9a, inset -2px -2px 1px #2a2a2a; }

/* Presence overview */
.panel--presence { margin: 6px 0 0 1px; overflow: hidden; }
.panel--presence > header { padding-left: 5px; }
.presence { display: flex; }
.presence__main { flex: 1; padding: 15px 15px 2px; }
.presence > .vscroll { width: 16px; }
.action--tall { height: 43px; gap: 11px; padding: 0 10px; }
.action--tall a { color: #5a9fd6; }
.people { display: grid; width: 96%; margin-top: 10px; grid-template-columns: repeat(6, 1fr); grid-template-rows: repeat(4, 29px 28px); gap: 10px; }
.people li { display: flex; align-items: center; padding: 0 5px 2px; border: 1px solid #333; border-radius: 4px; }

/* Status bar */
footer { flex: 1; display: grid; grid-template-columns: 98px 75px 179px; min-height: 46px; padding: 2px 0 4px; }
.stat { display: flex; align-items: center; gap: 4px; height: 40px; padding: 0 20px; border-right: 1px solid #9aa6b8; font-weight: 700; }
.stat button { margin-left: auto; }
```
